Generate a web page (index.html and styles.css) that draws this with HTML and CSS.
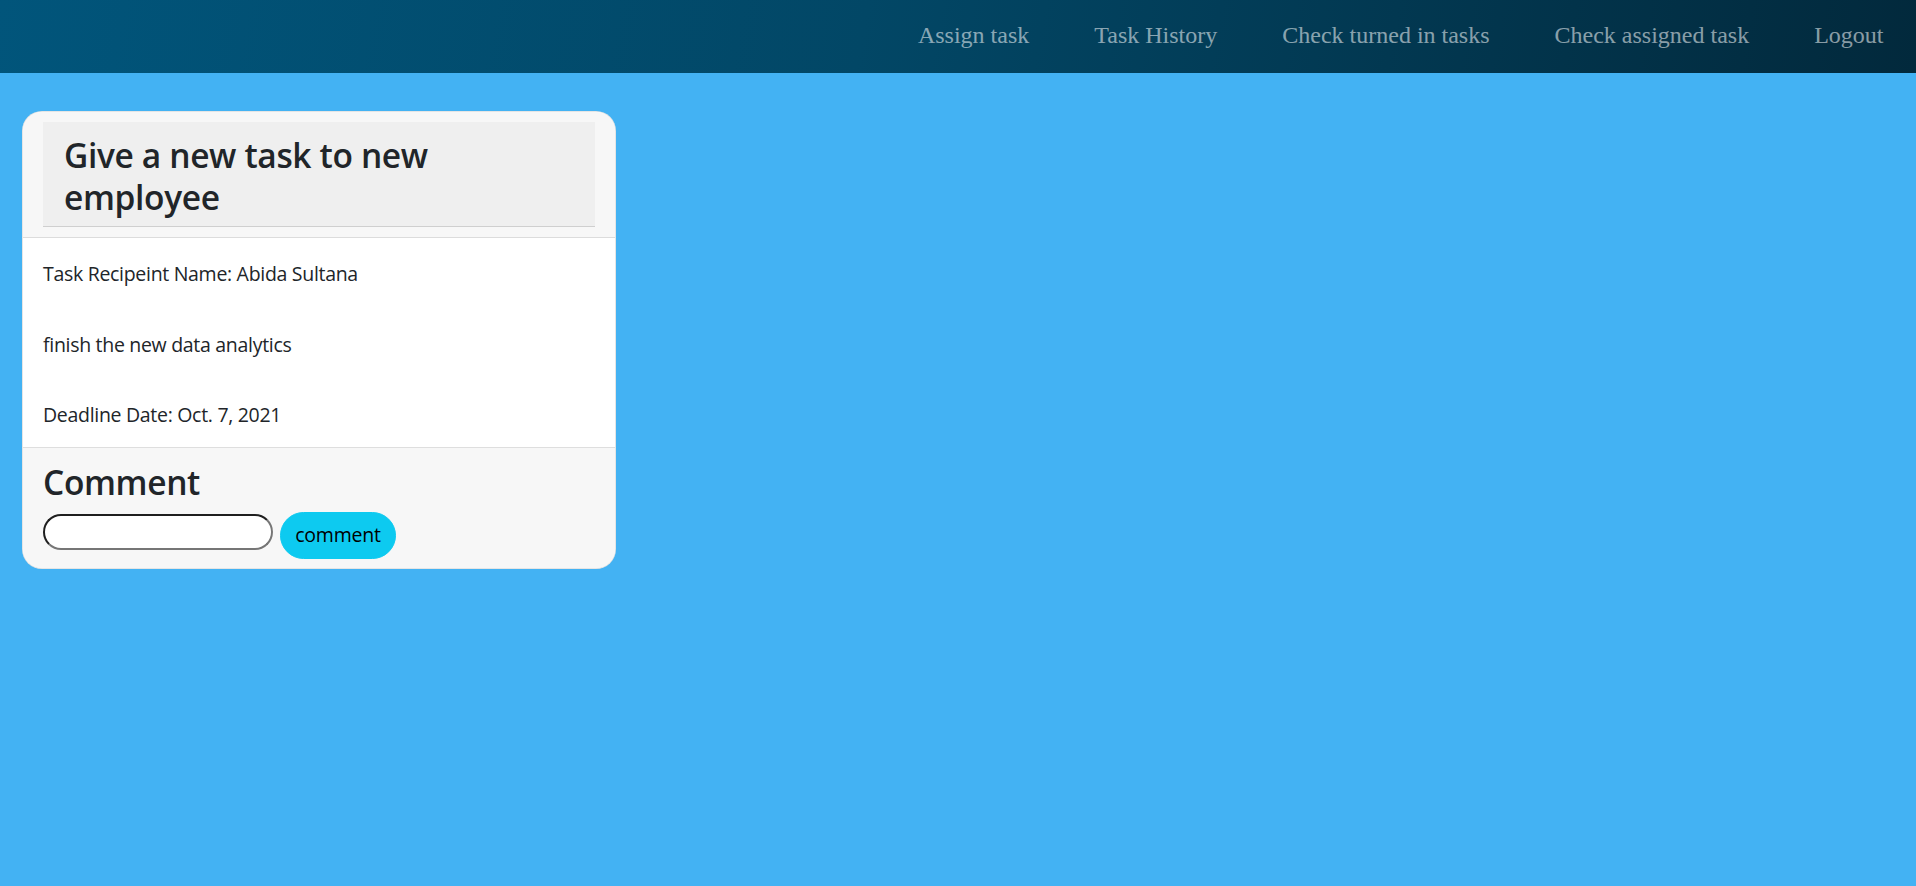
FILE: index.html
```html
<!DOCTYPE html>
<html lang="en">
<head>
<meta charset="utf-8">
<title>Assign task</title>
<link rel="stylesheet" href="styles.css">
</head>
<body>
<header class="topbar">
  <nav class="nav">
    <a class="nav-link" href="#">Assign task</a>
    <a class="nav-link" href="#">Task History</a>
    <a class="nav-link" href="#">Check turned in tasks</a>
    <a class="nav-link" href="#">Check assigned task</a>
    <a class="nav-link" href="#">Logout</a>
  </nav>
</header>
<main class="page">
  <section class="card">
    <div class="card-header">
      <h3 class="card-title">Give a new task to new employee</h3>
    </div>
    <div class="card-body">
      <p class="line">Task Recipeint Name: Abida Sultana</p>
      <p class="line">finish the new data analytics</p>
      <p class="line">Deadline Date: Oct. 7, 2021</p>
    </div>
    <div class="card-footer">
      <h3 class="footer-title">Comment</h3>
      <form class="comment-form">
        <input class="comment-input" type="text" name="comment">
        <button class="btn-info" type="button">comment</button>
      </form>
    </div>
  </section>
</main>
</body>
</html>
```
FILE: styles.css
```css
* { box-sizing: border-box; }

html, body {
  margin: 0;
  padding: 0;
}

body {
  background: #43b2f3;
  font-family: "Open Sans", "Noto Sans", sans-serif;
  color: #212529;
  min-height: 886px;
}

.topbar {
  height: 73px;
  background: linear-gradient(100deg, #01557b 0%, #024766 45%, #02293c 100%);
  display: flex;
  justify-content: flex-end;
  align-items: center;
}

.nav {
  display: flex;
  align-items: center;
  margin-bottom: 2px;
}

.nav-link {
  font-family: "Liberation Serif", "Times New Roman", serif;
  font-size: 24px;
  color: rgba(255, 255, 255, 0.55);
  text-decoration: none;
  padding: 0 32.5px;
}

.page {
  padding: 38px 0 0 22px;
}

.card {
  width: 594px;
  background: #fff;
  border: 1px solid rgba(0, 0, 0, 0.1);
  border-radius: 20px;
  overflow: hidden;
}

.card-header {
  background: #f7f7f7;
  padding: 10px 20px 10px;
  border-bottom: 1px solid #dcdcdc;
}

.card-title {
  margin: 0;
  background: #efefef;
  border-bottom: 1px solid #cfcfcf;
  padding: 13px 21px 8px;
  font-size: 33.5px;
  line-height: 41.6px;
  font-weight: 600;
  letter-spacing: -0.35px;
  color: #212529;
}

.card-body {
  padding: 21px 20px 17px;
}

.line {
  margin: 0 0 40.5px;
  font-size: 19.5px;
  line-height: 30px;
  letter-spacing: -0.3px;
}

.line:last-child {
  margin-bottom: 0;
}

.card-footer {
  background: #f7f7f7;
  border-top: 1px solid #dedede;
  padding: 14px 20px 9px;
}

.footer-title {
  margin: 0 0 8px;
  font-size: 33.5px;
  line-height: 41.6px;
  font-weight: 600;
  letter-spacing: -0.35px;
  color: #212529;
}

.comment-form {
  display: flex;
  align-items: flex-start;
  gap: 7px;
}

.comment-input {
  width: 230px;
  height: 36px;
  margin-top: 2px;
  border: 2px solid;
  border-color: #1f1f1f #767676 #767676 #1f1f1f;
  border-radius: 18px;
  background: #fff;
  padding: 0 12px;
  font-family: inherit;
  font-size: 16px;
}

.btn-info {
  width: 116px;
  height: 47px;
  border: 1px solid #0dcaf0;
  border-radius: 24px;
  background: #0dcaf0;
  color: #000;
  font-family: inherit;
  font-size: 19.5px;
  line-height: 30px;
  letter-spacing: -0.2px;
  padding: 0;
}
```
